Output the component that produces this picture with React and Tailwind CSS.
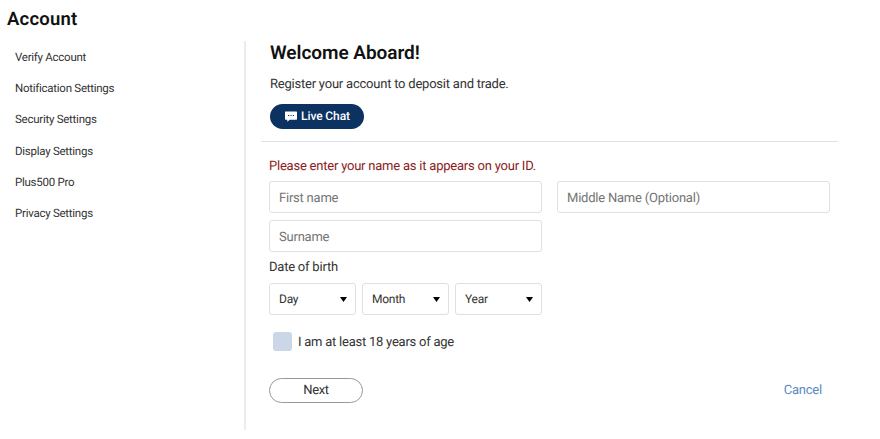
import { useState } from 'react';

const MENU_ITEMS = [
  'Verify Account',
  'Notification Settings',
  'Security Settings',
  'Display Settings',
  'Plus500 Pro',
  'Privacy Settings',
];

const DATE_PARTS = ['Day', 'Month', 'Year'];

const fieldClass = 'rounded-[3px] border border-[#e0e0e0] bg-white [text-rendering:geometricPrecision]';
const bodyText = 'text-[13px] leading-[20px] tracking-[-0.22px]';

function ChatIcon() {
  return (
    <svg width="12" height="12" viewBox="0 0 12 12" fill="none">
      <path d="M.6 1.500h10.8a.6.6 0 0 1 .6.6v7a.6.6 0 0 1-.6.6H4.700L2.300 11.800V9.700H.6a.6.6 0 0 1-.6-.6v-7a.6.6 0 0 1 .6-.6z" fill="#fff" />
      <path d="M3 5.500h1.200M5.400 5.500h1.200M7.800 5.500h1.200" stroke="#0c3262" strokeWidth="1" />
    </svg>
  );
}

function TextField({ placeholder, value, onChange }) {
  return (
    <input
      type="text"
      placeholder={placeholder}
      value={value}
      onChange={(e) => onChange(e.target.value)}
      className={`${fieldClass} block h-8 w-[273px] px-[9px] pt-0.5 text-[13px] tracking-[-0.22px] text-[#333] outline-none placeholder:text-[#757575]`}
    />
  );
}

function DateSelect({ label }) {
  return (
    <button type="button" className={`${fieldClass} flex h-8 w-[87px] items-center justify-between pl-[9px] pr-2 text-[12px] tracking-[-0.25px] text-[#333]`}>
      <span>{label}</span>
      <svg width="7" height="5" viewBox="0 0 7 5">
        <path d="M0 0h7L3.5 5z" fill="#000" />
      </svg>
    </button>
  );
}

export default function App() {
  const [form, setForm] = useState({ first: '', middle: '', surname: '' });
  const [isAdult, setIsAdult] = useState(false);

  const update = (key) => (value) => setForm((prev) => ({ ...prev, [key]: value }));

  return (
    <div className="h-[439px] w-[880px] overflow-hidden bg-white pt-[7px] font-['Roboto',sans-serif] text-[#333] [text-rendering:geometricPrecision]">
      <h1 className="pl-[7px] text-[18.5px] font-semibold leading-[24px] tracking-[0.2px] text-[#111]">Account</h1>

      <div className="mt-[10px] flex h-[389px]">
        <aside className="w-[246px] shrink-0 border-r-2 border-[#ececec] pl-[15px]">
          <ul>
            {MENU_ITEMS.map((item) => (
              <li key={item} className="h-[31.2px] text-[11.5px] leading-[32px] tracking-[-0.26px]">
                <a href="#" onClick={(e) => e.preventDefault()}>{item}</a>
              </li>
            ))}
          </ul>
        </aside>

        <main className="ml-[15px] w-[577px]">
          <header className="h-[101px] border-b border-[#dfe2e4] pl-[9px]">
            <h2 className="text-[19px] font-semibold leading-[24px] tracking-[-0.05px] text-[#111]">Welcome Aboard!</h2>
            <p className={`mt-[10px] ${bodyText}`}>Register your account to deposit and trade.</p>
            <button type="button" className="mt-[9px] flex h-[25px] w-[94px] items-center justify-center gap-1 rounded-full bg-[#0c3262] pb-px pl-px text-[12px] font-medium tracking-[-0.1px] text-white [text-rendering:geometricPrecision]">
              <ChatIcon />
              Live Chat
            </button>
          </header>

          <form className="px-2 pt-[15px]" onSubmit={(e) => e.preventDefault()}>
            <p className={`text-[#8a1c1c] ${bodyText}`}>Please enter your name as it appears on your ID.</p>
            <div className="mt-1 grid grid-cols-[273px_273px] gap-x-[15px] gap-y-[7px]">
              <TextField placeholder="First name" value={form.first} onChange={update('first')} />
              <TextField placeholder="Middle Name (Optional)" value={form.middle} onChange={update('middle')} />
              <TextField placeholder="Surname" value={form.surname} onChange={update('surname')} />
            </div>

            <p className={`mt-[6px] ${bodyText}`}>Date of birth</p>
            <div className="mt-[5px] flex gap-[6px]">
              {DATE_PARTS.map((part) => (
                <DateSelect key={part} label={part} />
              ))}
            </div>

            <label className="ml-1 mt-[17px] flex items-center gap-[6px] text-[13px] leading-[19px] tracking-[-0.24px]">
              <input
                type="checkbox"
                checked={isAdult}
                onChange={(e) => setIsAdult(e.target.checked)}
                className="size-[19px] appearance-none rounded-[3px] bg-[#cbd6e6] checked:bg-[#0c3262]"
              />
              <span className="pt-0.5 leading-[17px]">I am at least 18 years of age</span>
            </label>

            <div className="mt-[27px] flex items-center justify-between pr-2">
              <button type="submit" className="h-[25px] w-[94px] rounded-full border border-[#999] text-[13px] leading-[22px] tracking-[-0.3px] [text-rendering:geometricPrecision]">Next</button>
              <button type="button" className="text-[13px] tracking-[-0.22px] text-[#5b89c4] [text-rendering:geometricPrecision]">Cancel</button>
            </div>
          </form>
        </main>
      </div>
    </div>
  );
}
